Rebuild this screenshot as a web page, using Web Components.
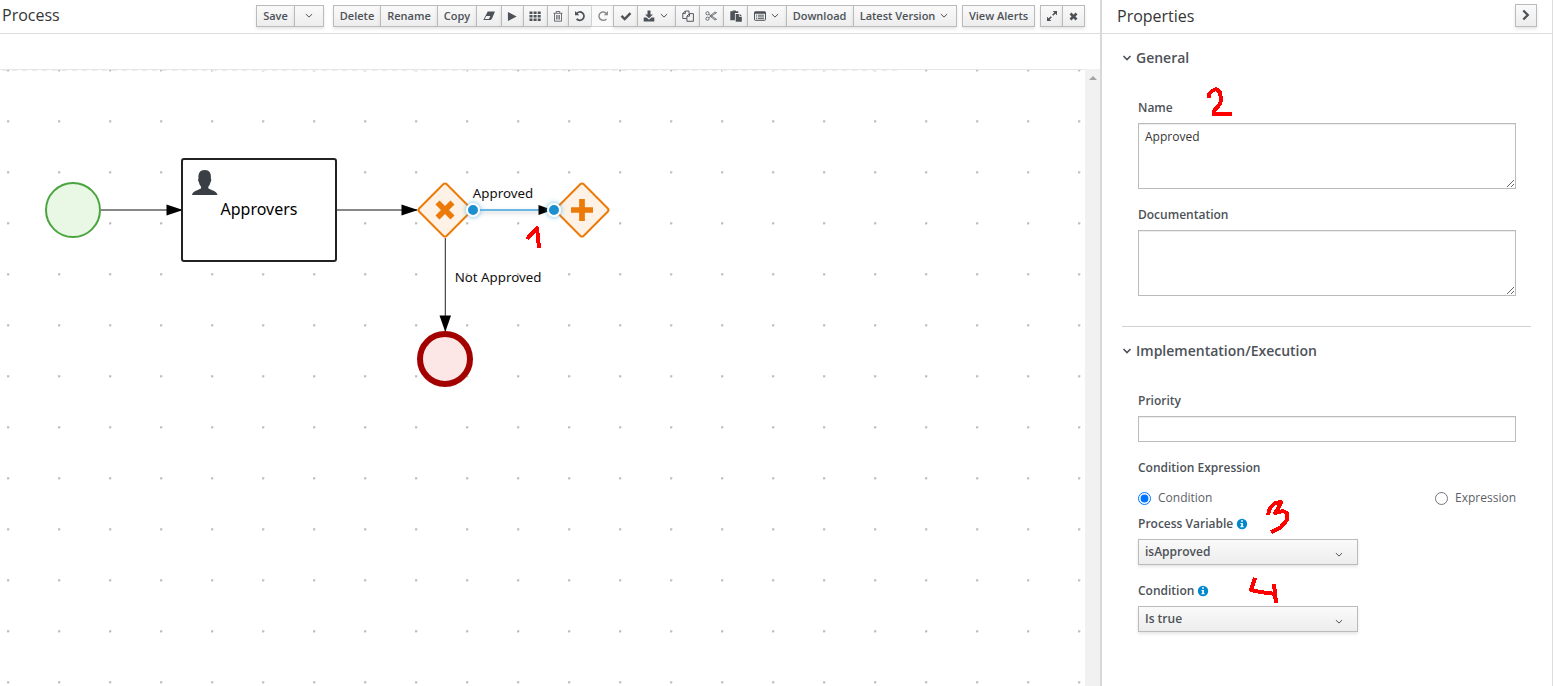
<!DOCTYPE html>
<html lang="en">
<head>
<meta charset="utf-8">
<title>Process</title>
<style>
html,body{margin:0;height:100%;overflow:hidden;background:#fff}
body{font-family:"Open Sans","Noto Sans",sans-serif;font-size:12px;color:#4d5258}
</style>
</head>
<body>
<process-app></process-app>
<script>
const define=(name,html)=>customElements.define(name,class extends HTMLElement{
  constructor(){super();this.attachShadow({mode:'open'});}
  connectedCallback(){
    const t=document.createElement('template');
    t.innerHTML=typeof html==='function'?html(this):html;
    this.shadowRoot.replaceChildren(t.content.cloneNode(true));
  }
});

const ICONS={
  down:'<path d="M1.900 3.100L5 6.100 8.100 3.100" fill="none" stroke="currentColor" stroke-width="1"/>',
  downbold:'<path d="M1.500 3l3.500 3.500L8.500 3" fill="none" stroke="currentColor" stroke-width="1.600"/>',
  eraser:'<path d="M4.700 1.500H12L9 8.500 7.700 10H.3L4 3z" fill="currentColor"/><path d="M1.700 9.100l1.700-3h4L5.900 9.100z" fill="#f4f4f4"/>',
  play:'<path d="M1 1l9.500 5L1 11z" fill="currentColor"/>',
  th:'<path d="M.5 1.500h3v2.600h-3zM4.600 1.500h3v2.600h-3zM8.700 1.500h3v2.600h-3zM.5 5h3v2.600h-3zM4.600 5h3v2.600h-3zM8.700 5h3v2.600h-3zM.5 8.500h3v2.600h-3zM4.600 8.500h3v2.600h-3zM8.700 8.500h3v2.600h-3z" fill="currentColor"/>',
  trash:'<path d="M1.500 3.300h9M4.200 3V1.500h3.600V3M2.500 3.500v7.700h7V3.500M4.600 5v4.500M6 5v4.500M7.400 5v4.500" fill="none" stroke="currentColor" stroke-width=".8"/>',
  undo:'<path d="M2.400 3.700A4.200 4.200 0 1 1 2.600 8.900" fill="none" stroke="currentColor" stroke-width="1.700"/><path d="M1 1v4.300h4.300z" fill="currentColor"/>',
  redo:'<path d="M9.600 3.700A4.200 4.200 0 1 0 9.400 8.900" fill="none" stroke="currentColor" stroke-width="1.500"/><path d="M11 1v4.300H6.700z" fill="currentColor"/>',
  check:'<path d="M1.500 5.800l3.200 3.200 5.800-5.800" fill="none" stroke="currentColor" stroke-width="2.400"/>',
  save:'<path d="M4.500 .5h3v4H10L6 8.300 2 4.500h2.500z" fill="currentColor"/><path d="M.7 7.500h2.800L6 9.700l2.500-2.200h2.800v4H.7z" fill="currentColor"/>',
  copy:'<path d="M4.500 8.500H.8V3.500L3.300 1H7v2.600M3.300 1v2.500H.8M7.500 3.600H11.400v7.700H4.900V6.200zM7.500 3.600v2.600H4.900" fill="none" stroke="currentColor" stroke-width=".95"/>',
  cut:'<g fill="none" stroke="currentColor" stroke-width=".8"><circle cx="2.500" cy="3.300" r="1.600"/><circle cx="2.500" cy="8.700" r="1.600"/><path d="M3.800 4.300L11.500 9.300 10 10 5.500 6.500M3.800 7.700L11.500 2.700 10 2 5.500 5.500"/></g>',
  paste:'<path d="M.3 1.300h2.400V.5h3.200v.8h2.400V3H4.900v7.300H.3z" fill="currentColor"/><path d="M5.700 3.900h3.200v2.900h2.900v4.900H5.700z" fill="currentColor"/><path d="M9.700 3.800l2.100 2.200H9.700z" fill="currentColor"/>',
  list:'<rect x=".5" y="1.900" width="11" height="8.400" rx=".8" fill="none" stroke="currentColor"/><path d="M.5 1.600h11v2.200H.5z" fill="currentColor"/><path d="M2 5.200h1.200M4 5.200h6M2 6.900h1.200M4 6.900h6M2 8.600h1.200M4 8.600h6" stroke="currentColor" stroke-width=".9"/>',
  expand:'<path d="M6.700 1H11v4.300zM1 6.700V11h4.300z" fill="currentColor"/><path d="M9.700 2.300L6.700 5.300M2.300 9.700l3-3" stroke="currentColor" stroke-width="1.600"/>',
  close:'<path d="M2.700 2.700l6.600 6.600M9.300 2.700L2.700 9.300" stroke="currentColor" stroke-width="2.800"/>',
  right:'<path d="M3.300 1.500L7.800 6 3.300 10.500" fill="none" stroke="currentColor" stroke-width="2.300"/>',
  info:'<circle cx="6" cy="6" r="5.200" fill="#0088ce"/><path d="M5.100 2.300h1.800v1.500H5.100zM4.400 4.900h2.500v3.400h.8v1H4.300v-1h.9V5.900h-.8z" fill="#fff"/>'
};
define('ui-icon',el=>{
  const n=el.getAttribute('name'),s=el.getAttribute('size')||12,v=n.startsWith('down')?10:12;
  return `<style>:host{display:inline-flex;flex:none}svg{display:block}</style><svg width="${s}" height="${s}" viewBox="0 0 ${v} ${v}">${ICONS[n]}</svg>`;
});

define('tool-button',el=>`<style>
:host{display:block;flex:none;width:${el.getAttribute('w')}px;height:22px;box-sizing:border-box;border:1px solid #bbb;border-right-width:0;background:linear-gradient(#fafafa,#ededed);box-shadow:0 2px 3px rgba(3,3,3,.1);color:#4d5258}
:host([end]){border-right-width:1px}
:host([disabled]){background:#fafafa;border-color:#d1d1d1;color:#8b8d8f;box-shadow:none}
button{all:unset;box-sizing:border-box;width:100%;height:20px;display:flex;align-items:center;justify-content:center;gap:4px;font:600 11px/20px "Open Sans",sans-serif;white-space:nowrap}
:host([left]) button{padding-right:1px}
</style><button><slot></slot></button>`);
define('button-group','<style>:host{display:flex;flex:none}</style><slot></slot>');

define('process-toolbar',`<style>
:host{display:flex;align-items:flex-start;height:33px;border-bottom:1px solid #ddd;box-sizing:content-box}
h1{margin:0;width:254px;padding:4px 0 0 2px;font:400 16px/23px "Open Sans",sans-serif;color:#363636;flex:none}
nav{display:flex;padding-top:5px}
button-group+button-group{margin-left:9px}
button-group.near+button-group.near{margin-left:5px}
</style><h1>Process</h1><nav>
<button-group><tool-button w="38">Save</tool-button><tool-button w="30" end left><ui-icon name="down" size="10"></ui-icon></tool-button></button-group>
<button-group class="near"><tool-button w="47">Delete</tool-button><tool-button w="57">Rename</tool-button><tool-button w="39">Copy</tool-button><tool-button w="25"><ui-icon name="eraser"></ui-icon></tool-button><tool-button w="22"><ui-icon name="play" size="11"></ui-icon></tool-button><tool-button w="24" left><ui-icon name="th"></ui-icon></tool-button><tool-button w="21" left><ui-icon name="trash"></ui-icon></tool-button><tool-button w="23" left><ui-icon name="undo"></ui-icon></tool-button><tool-button w="22" disabled><ui-icon name="redo"></ui-icon></tool-button><tool-button w="24"><ui-icon name="check"></ui-icon></tool-button><tool-button w="38" left><ui-icon name="save"></ui-icon><ui-icon name="down" size="10"></ui-icon></tool-button><tool-button w="24"><ui-icon name="copy"></ui-icon></tool-button><tool-button w="24" left><ui-icon name="cut"></ui-icon></tool-button><tool-button w="24"><ui-icon name="paste"></ui-icon></tool-button><tool-button w="39" left><ui-icon name="list"></ui-icon><ui-icon name="down" size="10"></ui-icon></tool-button><tool-button w="67" left>Download</tool-button><tool-button w="104" end left>Latest Version<ui-icon name="down" size="10"></ui-icon></tool-button></button-group>
<button-group class="near"><tool-button w="73" end>View Alerts</tool-button></button-group>
<button-group class="near"><tool-button w="22"><ui-icon name="expand"></ui-icon></tool-button><tool-button w="23" end><ui-icon name="close" size="11"></ui-icon></tool-button></button-group>
</nav>`);

define('process-canvas',`<style>
:host{display:flex;height:617px;overflow:hidden}
svg{display:block;flex:none}
.bar{width:15px;background:#f1f1f1;display:flex;justify-content:center;padding-top:7px;box-sizing:border-box}
.bar i{width:0;height:0;border:4px solid transparent;border-top:0;border-bottom-color:#a3a3a3}
text{font-family:"Noto Sans",sans-serif}
</style>
<svg width="1085" height="617" viewBox="0 69 1085 617">
<defs>
<pattern id="dots" x="7" y="120" width="51" height="51" patternUnits="userSpaceOnUse"><path d="M0 .2h2.300v1L1.700 2.500H.2z" fill="#bcbcbc"/></pattern>
<filter id="glow" x="-100%" y="-100%" width="300%" height="300%"><feDropShadow dx="0" dy="0" stdDeviation="2.500" flood-color="#39a5dc" flood-opacity=".8"/></filter>
<filter id="lineglow" x="470" y="195" width="90" height="30" filterUnits="userSpaceOnUse"><feDropShadow dx="0" dy="2" stdDeviation="2" flood-color="#777" flood-opacity=".5"/></filter>
</defs>
<rect y="69" width="1085" height="617" fill="url(#dots)"/>
<path d="M0 69.500H1085" stroke="#e6e6e6"/><path d="M2 70.500H898" stroke="#ececec" stroke-dasharray="5 5"/>
<circle cx="73" cy="210" r="27" fill="#e8f8e5" stroke="#4aa53f" stroke-width="2"/>
<path d="M101 210H182M337 210H417" stroke="#111"/>
<path d="M166.500 204.500L183 210l-16.500 5.500zM401.500 204.500L418 210l-16.500 5.500z"/>
<rect x="182" y="159" width="154" height="102" rx="2" fill="#fff" stroke="#222" stroke-width="2"/>
<path d="M192 195c1-4 5-4.500 8.500-6.200.7-.5.800-1.500.3-2.600-1.200-1.200-1.700-2.700-1.900-4.200-1-.7-1-2.700-.4-3.200-.5-5.500 1.500-8.800 6.200-8.800s6.700 3.300 6.200 8.800c.6.500.6 2.500-.4 3.200-.2 1.500-.7 3-1.900 4.200-.5 1.100-.4 2.100.3 2.600 3.500 1.700 7.500 2.200 8.600 6.200z" fill="#393f44"/>
<text x="259" y="215" text-anchor="middle" font-size="16">Approvers</text>
<path d="M445.300 238V331" stroke="#222"/><path d="M439.500 315.500h11.500L445.300 332z"/>
<g fill="#fdf2e5" stroke="#ec7a08" stroke-width="2" stroke-linejoin="round"><rect x="425.600" y="190.600" width="38.800" height="38.800" rx="2.500" transform="rotate(45 445 210)"/><rect x="562.600" y="190.600" width="38.800" height="38.800" rx="2.500" transform="rotate(45 582 210)"/></g>
<path d="M437.500 202.500l15 15M452.500 202.500l-15 15" stroke="#ec7a08" stroke-width="5.700"/>
<path d="M582 199v22M571 210h22" stroke="#ec7a08" stroke-width="5.700"/>
<path d="M473 210H540" stroke="#39a5dc" stroke-width="1.500" filter="url(#lineglow)"/>
<path d="M538.500 205l14 5-14 5z"/>
<g fill="#1b8fd0" stroke="#fff" stroke-width="2" filter="url(#glow)"><circle cx="473" cy="210" r="6"/><circle cx="554" cy="210" r="6"/></g>
<text x="503" y="198" text-anchor="middle" font-size="13.300" fill="#111">Approved</text>
<text x="498" y="282" text-anchor="middle" font-size="13.300" fill="#111">Not Approved</text>
<circle cx="445" cy="359" r="25" fill="#fce6e6" stroke="#a30000" stroke-width="6"/>
</svg><div class="bar"><i></i></div>`);

define('prop-section',el=>`<style>
:host{display:block;margin:0 20px}
h2{margin:0;display:flex;align-items:center;gap:4px;height:20px;font:600 14px/20px "Open Sans",sans-serif;color:#4d5258}
.body{padding:0 16px}
</style><h2><ui-icon name="downbold" size="10"></ui-icon><span>${el.getAttribute('heading')}</span></h2><div class="body"><slot></slot></div>`);
define('prop-label',`<style>:host{display:flex;align-items:center;gap:2.500px;height:18px;font:600 12px/18px "Open Sans",sans-serif;color:#4d5258}</style><slot></slot>`);
define('prop-area',el=>`<style>:host{display:block}textarea{display:block;box-sizing:border-box;width:378px;height:66px;margin:0;padding:4px 6px 3px;border:1px solid #bbb;outline:0;resize:vertical;font:400 12px/18px "Open Sans",sans-serif;color:#363636;box-shadow:inset 0 1px 1px rgba(3,3,3,.075)}</style><textarea>${el.getAttribute('value')||''}</textarea>`);
define('prop-input',`<style>:host{display:block}input{display:block;box-sizing:border-box;width:378px;height:26px;border:1px solid #bbb;margin:0;box-shadow:inset 0 1px 1px rgba(3,3,3,.075)}</style><input>`);
define('prop-radio',el=>`<style>:host{display:block}label{display:flex;align-items:center;gap:7px;height:18px;font:400 12px/18px "Open Sans",sans-serif;color:#5c6167}input{margin:0;width:13px;height:13px}</style><label><input type="radio" ${el.hasAttribute('checked')?'checked':''}><slot></slot></label>`);
define('prop-select',`<style>:host{display:flex;box-sizing:border-box;width:220px;height:26px;border:1px solid #bbb;background:linear-gradient(#fafafa,#ededed);box-shadow:0 2px 3px rgba(3,3,3,.1);justify-content:space-between;padding:0 13px 0 6px;font:600 12px/24px "Open Sans",sans-serif;color:#4d5258}ui-icon{padding-top:10px;height:10px}</style><span><slot></slot></span><ui-icon name="down" size="10"></ui-icon>`);

define('properties-panel',`<style>
:host{display:flex;flex-direction:column;width:450px;height:686px;box-sizing:border-box;border-right:1px solid #ddd;background:#fff}
header{height:33px;flex:none;border-bottom:1px solid #ddd;display:flex;justify-content:space-between;padding:0 15px}
h1{margin:0;font:400 16px/32px "Open Sans",sans-serif;color:#363636}
header tool-button{margin-top:4px;height:23px}
hr{border:0;height:1px;background:#d1d1d1;margin:30px 21px 14px 20px;flex:none}
.a{margin-top:31px}.b{margin-top:17px}prop-label{margin-bottom:6px}.radios{display:flex;justify-content:space-between;margin-top:12px;margin-bottom:8px}
</style>
<header><h1>Properties</h1><tool-button w="22" end><ui-icon name="right"></ui-icon></tool-button></header>
<prop-section heading="General" style="margin-top:14px">
<prop-label class="a">Name</prop-label><prop-area value="Approved"></prop-area>
<prop-label class="b">Documentation</prop-label><prop-area></prop-area>
</prop-section><hr>
<prop-section heading="Implementation/Execution">
<prop-label class="a">Priority</prop-label><prop-input></prop-input>
<prop-label class="b">Condition Expression</prop-label>
<div class="radios"><prop-radio checked>Condition</prop-radio><prop-radio>Expression</prop-radio></div>
<prop-label>Process Variable<ui-icon name="info"></ui-icon></prop-label><prop-select>isApproved</prop-select>
<prop-label style="margin-top:17px">Condition<ui-icon name="info"></ui-icon></prop-label><prop-select>Is true</prop-select>
</prop-section>`);

define('hand-marks',`<style>:host{position:absolute;inset:0;pointer-events:none}svg{display:block}</style>
<svg width="1553" height="686" fill="none" stroke="#f00" stroke-width="4" shape-rendering="crispEdges" stroke-linejoin="round">
<path d="M527 239l10-11 2 20"/><path d="M1209 98v-4l3-3 4-2 4 3 1 8-1 4-6 7v3h18"/>
<path d="M1268 515l2-7 5-5 6-1-2 5-4 6 8-2 4 2v7l-6 7-5 3-5 2"/><path d="M1255 578l-4 12 9 2 16 2M1274 584l2 19"/>
</svg>`);

define('process-app',`<style>
:host{display:flex;width:1553px;height:686px;position:relative;overflow:hidden}
main{width:1100px;flex:none;display:flex;flex-direction:column}.crumb{height:35px;flex:none}
.split{width:2px;background:#d9d9d9;flex:none}properties-panel{width:451px}
</style><main><process-toolbar></process-toolbar><div class="crumb"></div><process-canvas></process-canvas></main><div class="split"></div><properties-panel></properties-panel><hand-marks></hand-marks>`);
</script>
</body>
</html>
